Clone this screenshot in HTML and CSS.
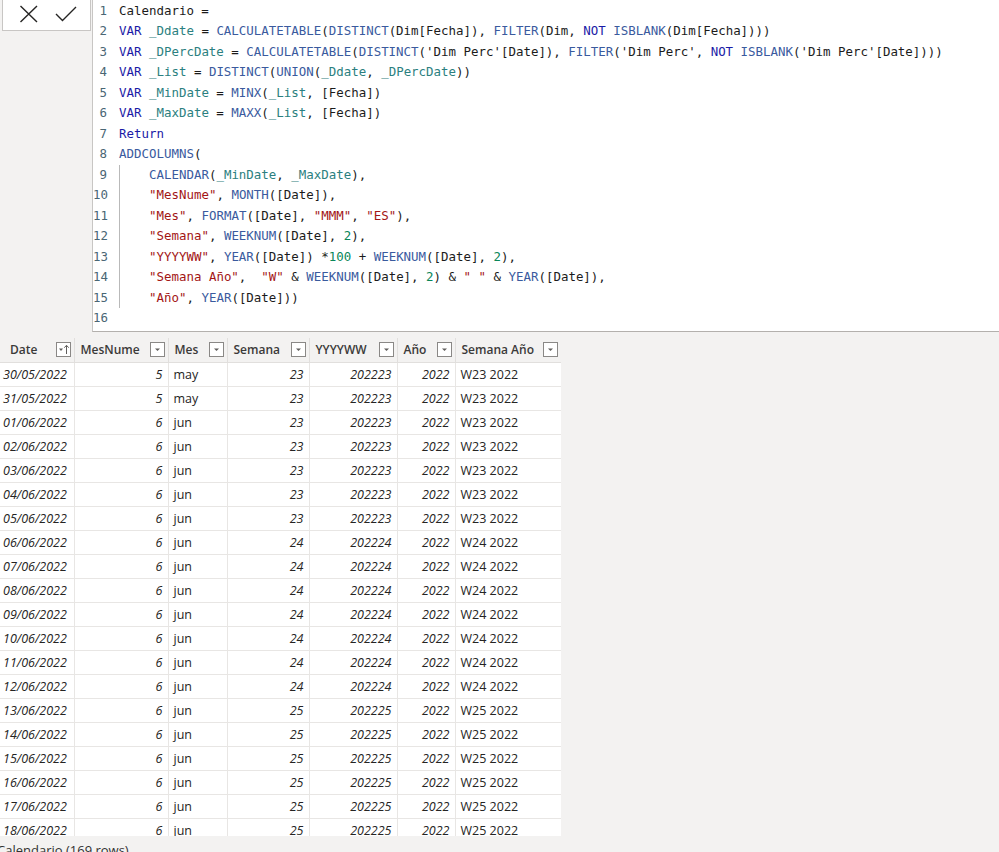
FILE: index.html
```html
<!DOCTYPE html>
<html lang="es">
<head>
<meta charset="utf-8">
<title>Calendario</title>
<link rel="stylesheet" href="styles.css">
</head>
<body>
<div class="top">
  <div class="actions">
    <svg class="ico" width="20" height="22" viewBox="0 0 20 22"><path d="M1.5 4 L18 20 M18 4 L1.5 20" stroke="#252423" stroke-width="1.4" fill="none"/></svg>
    <svg class="ico" width="22" height="22" viewBox="0 0 22 22"><path d="M1 12 L7.5 18.5 L21 5" stroke="#252423" stroke-width="1.4" fill="none"/></svg>
  </div>
  <div class="editor">
    <div class="line"><span class="ln">1</span><span class="code">Calendario =</span></div>
    <div class="line"><span class="ln">2</span><span class="code"><b class="kw">VAR</b> <b class="v">_Ddate</b> = <b class="fn">CALCULATETABLE</b>(<b class="fn">DISTINCT</b>(Dim[Fecha]), <b class="fn">FILTER</b>(Dim, <b class="kw">NOT</b> <b class="fn">ISBLANK</b>(Dim[Fecha])))</span></div>
    <div class="line"><span class="ln">3</span><span class="code"><b class="kw">VAR</b> <b class="v">_DPercDate</b> = <b class="fn">CALCULATETABLE</b>(<b class="fn">DISTINCT</b>('Dim Perc'[Date]), <b class="fn">FILTER</b>('Dim Perc', <b class="kw">NOT</b> <b class="fn">ISBLANK</b>('Dim Perc'[Date])))</span></div>
    <div class="line"><span class="ln">4</span><span class="code"><b class="kw">VAR</b> <b class="v">_List</b> = <b class="fn">DISTINCT</b>(<b class="fn">UNION</b>(<b class="v">_Ddate</b>, <b class="v">_DPercDate</b>))</span></div>
    <div class="line"><span class="ln">5</span><span class="code"><b class="kw">VAR</b> <b class="v">_MinDate</b> = <b class="fn">MINX</b>(<b class="v">_List</b>, [Fecha])</span></div>
    <div class="line"><span class="ln">6</span><span class="code"><b class="kw">VAR</b> <b class="v">_MaxDate</b> = <b class="fn">MAXX</b>(<b class="v">_List</b>, [Fecha])</span></div>
    <div class="line"><span class="ln">7</span><span class="code"><b class="kw">Return</b></span></div>
    <div class="line"><span class="ln">8</span><span class="code"><b class="fn">ADDCOLUMNS</b>(</span></div>
    <div class="line"><span class="ln">9</span><span class="code"><span class="guide"></span><b class="fn">CALENDAR</b>(<b class="v">_MinDate</b>, <b class="v">_MaxDate</b>),</span></div>
    <div class="line"><span class="ln">10</span><span class="code"><span class="guide"></span><b class="s">"MesNume"</b>, <b class="fn">MONTH</b>([Date]),</span></div>
    <div class="line"><span class="ln">11</span><span class="code"><span class="guide"></span><b class="s">"Mes"</b>, <b class="fn">FORMAT</b>([Date], <b class="s">"MMM"</b>, <b class="s">"ES"</b>),</span></div>
    <div class="line"><span class="ln">12</span><span class="code"><span class="guide"></span><b class="s">"Semana"</b>, <b class="fn">WEEKNUM</b>([Date], <b class="n">2</b>),</span></div>
    <div class="line"><span class="ln">13</span><span class="code"><span class="guide"></span><b class="s">"YYYYWW"</b>, <b class="fn">YEAR</b>([Date]) *<b class="n">100</b> + <b class="fn">WEEKNUM</b>([Date], <b class="n">2</b>),</span></div>
    <div class="line"><span class="ln">14</span><span class="code"><span class="guide"></span><b class="s">"Semana Año"</b>,  <b class="s">"W"</b> &amp; <b class="fn">WEEKNUM</b>([Date], <b class="n">2</b>) &amp; <b class="s">" "</b> &amp; <b class="fn">YEAR</b>([Date]),</span></div>
    <div class="line"><span class="ln">15</span><span class="code"><span class="guide"></span><b class="s">"Año"</b>, <b class="fn">YEAR</b>([Date]))</span></div>
    <div class="line"><span class="ln">16</span><span class="code"></span></div>
  </div>
</div>

<div class="grid-wrap">
  <table class="grid">
    <colgroup>
      <col class="c1"><col class="c2"><col class="c3"><col class="c4"><col class="c5"><col class="c6"><col class="c7">
    </colgroup>
    <thead>
      <tr>
        <th class="first"><div class="hd"><span>Date</span><svg class="fb" width="15" height="15" viewBox="0 0 15 15"><rect x="0.5" y="0.5" width="14" height="14" fill="#fff" stroke="#8a8886"/><path d="M3 6.5 H7 L5 9 Z" fill="#605e5c"/><path d="M10.5 12 V3.5 M8.3 5.7 L10.5 3.3 L12.7 5.7" stroke="#605e5c" stroke-width="1" fill="none"/></svg></div></th>
        <th><div class="hd"><span>MesNume</span><svg class="fb" width="15" height="15" viewBox="0 0 15 15"><rect x="0.5" y="0.5" width="14" height="14" fill="#fff" stroke="#8a8886"/><path d="M5 6.5 H10 L7.5 9 Z" fill="#605e5c"/></svg></div></th>
        <th><div class="hd"><span>Mes</span><svg class="fb" width="15" height="15" viewBox="0 0 15 15"><rect x="0.5" y="0.5" width="14" height="14" fill="#fff" stroke="#8a8886"/><path d="M5 6.5 H10 L7.5 9 Z" fill="#605e5c"/></svg></div></th>
        <th><div class="hd"><span>Semana</span><svg class="fb" width="15" height="15" viewBox="0 0 15 15"><rect x="0.5" y="0.5" width="14" height="14" fill="#fff" stroke="#8a8886"/><path d="M5 6.5 H10 L7.5 9 Z" fill="#605e5c"/></svg></div></th>
        <th><div class="hd"><span>YYYYWW</span><svg class="fb" width="15" height="15" viewBox="0 0 15 15"><rect x="0.5" y="0.5" width="14" height="14" fill="#fff" stroke="#8a8886"/><path d="M5 6.5 H10 L7.5 9 Z" fill="#605e5c"/></svg></div></th>
        <th><div class="hd"><span>Año</span><svg class="fb" width="15" height="15" viewBox="0 0 15 15"><rect x="0.5" y="0.5" width="14" height="14" fill="#fff" stroke="#8a8886"/><path d="M5 6.5 H10 L7.5 9 Z" fill="#605e5c"/></svg></div></th>
        <th><div class="hd"><span>Semana Año</span><svg class="fb" width="15" height="15" viewBox="0 0 15 15"><rect x="0.5" y="0.5" width="14" height="14" fill="#fff" stroke="#8a8886"/><path d="M5 6.5 H10 L7.5 9 Z" fill="#605e5c"/></svg></div></th>
      </tr>
    </thead>
    <tbody>
      <tr><td class="d">30/05/2022</td><td class="r">5</td><td>may</td><td class="r">23</td><td class="r">202223</td><td class="r">2022</td><td>W23 2022</td></tr>
      <tr><td class="d">31/05/2022</td><td class="r">5</td><td>may</td><td class="r">23</td><td class="r">202223</td><td class="r">2022</td><td>W23 2022</td></tr>
      <tr><td class="d">01/06/2022</td><td class="r">6</td><td>jun</td><td class="r">23</td><td class="r">202223</td><td class="r">2022</td><td>W23 2022</td></tr>
      <tr><td class="d">02/06/2022</td><td class="r">6</td><td>jun</td><td class="r">23</td><td class="r">202223</td><td class="r">2022</td><td>W23 2022</td></tr>
      <tr><td class="d">03/06/2022</td><td class="r">6</td><td>jun</td><td class="r">23</td><td class="r">202223</td><td class="r">2022</td><td>W23 2022</td></tr>
      <tr><td class="d">04/06/2022</td><td class="r">6</td><td>jun</td><td class="r">23</td><td class="r">202223</td><td class="r">2022</td><td>W23 2022</td></tr>
      <tr><td class="d">05/06/2022</td><td class="r">6</td><td>jun</td><td class="r">23</td><td class="r">202223</td><td class="r">2022</td><td>W23 2022</td></tr>
      <tr><td class="d">06/06/2022</td><td class="r">6</td><td>jun</td><td class="r">24</td><td class="r">202224</td><td class="r">2022</td><td>W24 2022</td></tr>
      <tr><td class="d">07/06/2022</td><td class="r">6</td><td>jun</td><td class="r">24</td><td class="r">202224</td><td class="r">2022</td><td>W24 2022</td></tr>
      <tr><td class="d">08/06/2022</td><td class="r">6</td><td>jun</td><td class="r">24</td><td class="r">202224</td><td class="r">2022</td><td>W24 2022</td></tr>
      <tr><td class="d">09/06/2022</td><td class="r">6</td><td>jun</td><td class="r">24</td><td class="r">202224</td><td class="r">2022</td><td>W24 2022</td></tr>
      <tr><td class="d">10/06/2022</td><td class="r">6</td><td>jun</td><td class="r">24</td><td class="r">202224</td><td class="r">2022</td><td>W24 2022</td></tr>
      <tr><td class="d">11/06/2022</td><td class="r">6</td><td>jun</td><td class="r">24</td><td class="r">202224</td><td class="r">2022</td><td>W24 2022</td></tr>
      <tr><td class="d">12/06/2022</td><td class="r">6</td><td>jun</td><td class="r">24</td><td class="r">202224</td><td class="r">2022</td><td>W24 2022</td></tr>
      <tr><td class="d">13/06/2022</td><td class="r">6</td><td>jun</td><td class="r">25</td><td class="r">202225</td><td class="r">2022</td><td>W25 2022</td></tr>
      <tr><td class="d">14/06/2022</td><td class="r">6</td><td>jun</td><td class="r">25</td><td class="r">202225</td><td class="r">2022</td><td>W25 2022</td></tr>
      <tr><td class="d">15/06/2022</td><td class="r">6</td><td>jun</td><td class="r">25</td><td class="r">202225</td><td class="r">2022</td><td>W25 2022</td></tr>
      <tr><td class="d">16/06/2022</td><td class="r">6</td><td>jun</td><td class="r">25</td><td class="r">202225</td><td class="r">2022</td><td>W25 2022</td></tr>
      <tr><td class="d">17/06/2022</td><td class="r">6</td><td>jun</td><td class="r">25</td><td class="r">202225</td><td class="r">2022</td><td>W25 2022</td></tr>
      <tr><td class="d">18/06/2022</td><td class="r">6</td><td>jun</td><td class="r">25</td><td class="r">202225</td><td class="r">2022</td><td>W25 2022</td></tr>
    </tbody>
  </table>
</div>

<div class="status">Calendario (169 rows)</div>
</body>
</html>
```

FILE: styles.css
```css
html, body {
  margin: 0;
  padding: 0;
}
body {
  width: 999px;
  height: 852px;
  overflow: hidden;
  background: #f3f2f1;
  font-family: "Open Sans", "Noto Sans", sans-serif;
  color: #252423;
}

/* ---------- formula bar ---------- */
.top {
  display: flex;
  align-items: flex-start;
  height: 332px;
}
.actions {
  margin-left: 2px;
  width: 89px;
  height: 31px;
  box-sizing: border-box;
  background: #fff;
  border: 1px solid #c8c6c4;
  border-top: none;
  display: flex;
  align-items: flex-start;
  padding: 2px 0 0 16px;
  gap: 16px;
}
.ico { display: block; }
.editor {
  margin-left: 1px;
  flex: 1;
  height: 332px;
  box-sizing: border-box;
  background: #fff;
  border-left: 1px solid #c8c6c4;
  border-bottom: 1px solid #b3b0ad;
  padding-top: 1px;
  font-family: "DejaVu Sans Mono", "Liberation Mono", monospace;
  font-size: 12.45px;
  color: #1b1b1b;
}
.line {
  display: flex;
  height: 20.47px;
  line-height: 20.47px;
  white-space: pre;
}
.ln {
  width: 14px;
  text-align: right;
  color: #4a6674;
  flex: none;
}
.code {
  margin-left: 12px;
}
.code b { font-weight: normal; }
.kw { color: #1a1aa6; }
.fn { color: #3a5a9e; }
.v  { color: #2b7f80; }
.s  { color: #a31515; }
.n  { color: #098658; }
.guide {
  display: inline-block;
  width: 30px;
  height: 20.47px;
  vertical-align: top;
  box-sizing: border-box;
  border-left: 1px solid #b9b9b9;
}

/* ---------- data grid ---------- */
.grid-wrap {
  margin-top: 6px;
  width: 561px;
  height: 498px;
  overflow: hidden;
  background: #fff;
}
.grid {
  border-collapse: collapse;
  table-layout: fixed;
  width: 561px;
  font-size: 12.5px;
}
.c1 { width: 74px; }
.c2 { width: 94px; }
.c3 { width: 59px; }
.c4 { width: 82px; }
.c5 { width: 88px; }
.c6 { width: 58px; }
.c7 { width: 106px; }
.grid th {
  height: 24px;
  padding: 0 3px 0 6px;
  background: #f3f2f1;
  border-right: 1px solid #e1dfdd;
  border-bottom: 1px solid #e1dfdd;
  font-weight: 600;
  font-size: 12px;
  color: #3b3a39;
  text-align: left;
  box-sizing: border-box;
}
.grid th.first { padding-left: 10px; }
.hd {
  display: flex;
  align-items: center;
  justify-content: space-between;
  white-space: nowrap;
}
.fb { display: block; flex: none; }
.grid td {
  height: 24px;
  box-sizing: border-box;
  padding: 0 5px;
  border-right: 1px solid #e8e6e4;
  border-bottom: 1px solid #e8e6e4;
  white-space: nowrap;
  overflow: hidden;
}
.grid td.d { font-style: italic; padding-left: 3px; }
.grid td.r { font-style: italic; text-align: right; }

/* ---------- status bar ---------- */
.status {
  padding-top: 5px;
  margin-left: -3px;
  font-size: 13px;
  line-height: 18px;
  color: #323130;
  white-space: nowrap;
}
```
